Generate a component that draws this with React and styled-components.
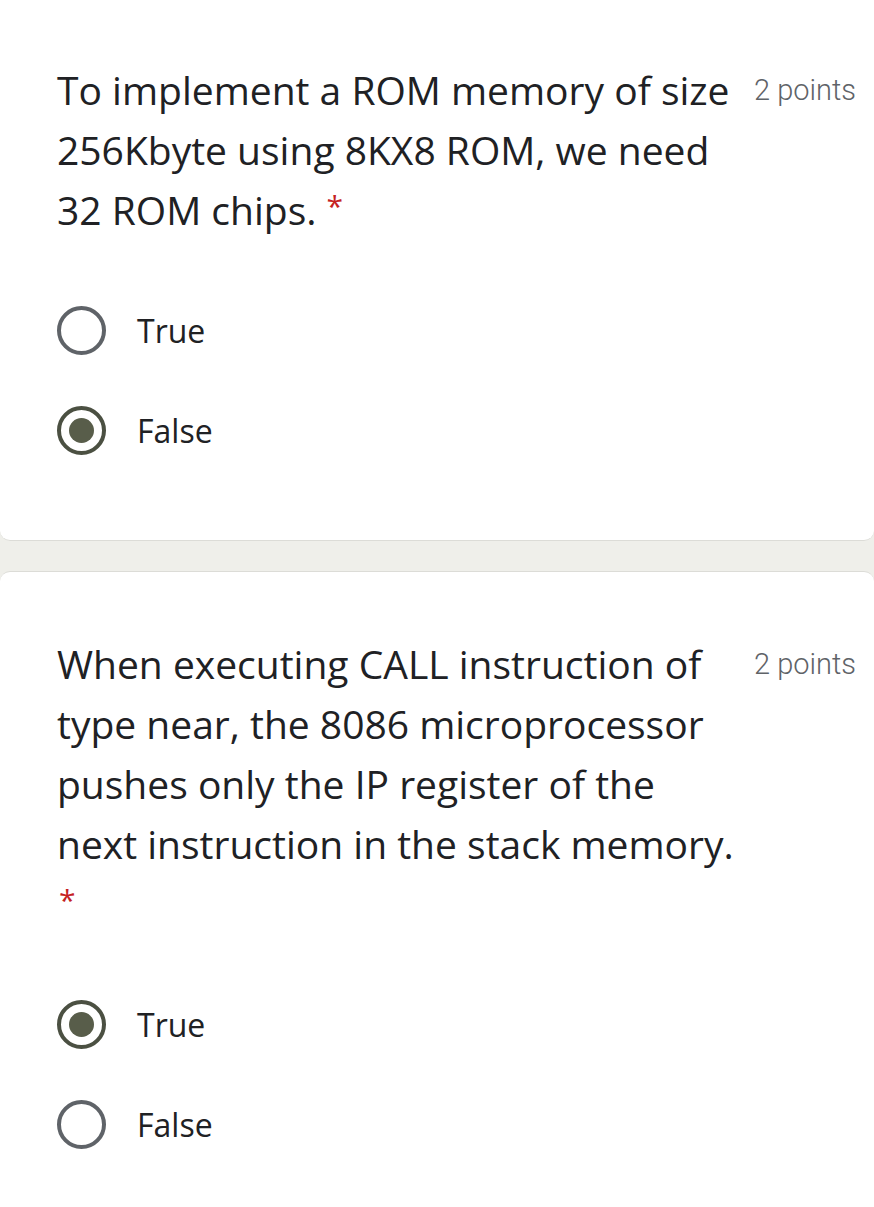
import React from 'react'
import styled, { createGlobalStyle } from 'styled-components'

const Global = createGlobalStyle`
  html, body {
    margin: 0;
    padding: 0;
    background: #efefea;
  }
  body {
    font-family: "Open Sans", Roboto, Arial, sans-serif;
    color: #202124;
  }
`

const Page = styled.div`
  display: flex;
  flex-direction: column;
  gap: 30px;
  width: 874px;
  min-height: 1207px;
  overflow: hidden;
`

const Card = styled.section`
  background: #fff;
  padding: ${p => (p.$first ? '60px 18px 60px 57px' : '62px 18px 35px 57px')};
  border-radius: ${p => (p.$first ? '0 0 10px 10px' : '10px 10px 0 0')};
  border-${p => (p.$first ? 'bottom' : 'top')}: 1px solid #dcdcd7;
  flex: ${p => (p.$first ? 'none' : '1')};
`

const Head = styled.div`
  display: flex;
  align-items: flex-start;
  justify-content: space-between;
`

const Title = styled.div`
  font-size: 39px;
  line-height: 60px;
  white-space: nowrap;
`

const Star = styled.span`
  color: #c5221f;
  font-size: 30px;
  vertical-align: top;
  margin-left: 10px;
  position: relative;
  top: -4px;
`

const Points = styled.div`
  font-family: Roboto, Arial, sans-serif;
  font-size: 29px;
  font-weight: 300;
  line-height: 60px;
  color: #5f6368;
  white-space: nowrap;
`

const Options = styled.div`
  display: flex;
  flex-direction: column;
  margin-top: 40px;
`

const Option = styled.label`
  display: flex;
  align-items: center;
  gap: 31px;
  height: 100px;
  font-size: 32px;
`

const Ring = styled.span`
  box-sizing: border-box;
  width: 49px;
  height: 49px;
  border-radius: 50%;
  border: 4.5px solid ${p => (p.$on ? '#4b5042' : '#5f6368')};
  display: flex;
  align-items: center;
  justify-content: center;
  flex: none;

  &::after {
    content: '';
    display: ${p => (p.$on ? 'block' : 'none')};
    width: 25px;
    height: 25px;
    border-radius: 50%;
    background: #585d4a;
  }
`

const Question = ({ first, lines, starOwnLine, choice }) => (
  <Card $first={first}>
    <Head>
      <Title>
        {lines.map((l, i) => (
          <div key={i}>
            {l}
            {!starOwnLine && i === lines.length - 1 && <Star>*</Star>}
          </div>
        ))}
        {starOwnLine && (
          <div>
            <Star style={{ marginLeft: 2 }}>*</Star>
          </div>
        )}
      </Title>
      <Points>2 points</Points>
    </Head>
    <Options>
      {['True', 'False'].map(o => (
        <Option key={o}>
          <Ring $on={choice === o} />
          {o}
        </Option>
      ))}
    </Options>
  </Card>
)

export default function App() {
  return (
    <Page>
      <Global />
      <Question
        first
        lines={[
          'To implement a ROM memory of size',
          '256Kbyte using 8KX8 ROM, we need',
          '32 ROM chips.',
        ]}
        choice="False"
      />
      <Question
        lines={[
          'When executing CALL instruction of',
          'type near, the 8086 microprocessor',
          'pushes only the IP register of the',
          'next instruction in the stack memory.',
        ]}
        starOwnLine
        choice="True"
      />
    </Page>
  )
}
